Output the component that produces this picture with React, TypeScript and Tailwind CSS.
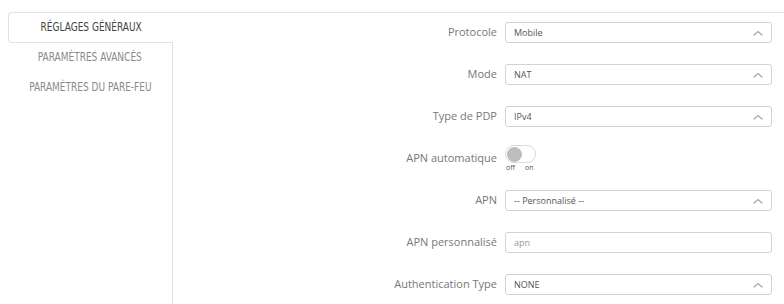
import React from 'react';

type Row =
  | { kind: 'select'; label: string; value: string }
  | { kind: 'input'; label: string; value: string }
  | { kind: 'switch'; label: string };

const rows: Row[] = [
  { kind: 'select', label: 'Protocole', value: 'Mobile' },
  { kind: 'select', label: 'Mode', value: 'NAT' },
  { kind: 'select', label: 'Type de PDP', value: 'IPv4' },
  { kind: 'switch', label: 'APN automatique' },
  { kind: 'select', label: 'APN', value: '-- Personnalisé --' },
  { kind: 'input', label: 'APN personnalisé', value: 'apn' },
  { kind: 'select', label: 'Authentication Type', value: 'NONE' },
];

const Chevron = () => (
  <svg width="10" height="6" viewBox="0 0 10 6" fill="none" className="shrink-0">
    <path d="M1 5 L5 1.5 L9 5" stroke="#a8a8a8" strokeWidth="1.3" strokeLinecap="round" />
  </svg>
);

function Field({ row }: { row: Row }) {
  if (row.kind === 'switch') {
    return (
      <div className="flex flex-col items-start">
        <div className="w-[31px] h-[18px] rounded-full border border-[#dadada] bg-white flex items-center pl-[1px]">
          <div className="w-[15px] h-[15px] rounded-full bg-[#bdbdbd]" />
        </div>
        <div className="flex gap-[10px] text-[7px] leading-[8px] text-[#555] mt-[1px] pl-[1px]">
          <span>off</span>
          <span>on</span>
        </div>
      </div>
    );
  }
  return (
    <div className="h-[21px] w-full border border-[#d2d2d2] rounded-[3px] flex items-center justify-between pl-[8px] pr-[8px] text-[9px] text-[#555] bg-white">
      <span className={row.kind === 'input' ? 'text-[#999]' : ''}>{row.value}</span>
      {row.kind === 'select' && <Chevron />}
    </div>
  );
}

function Tab({ label }: { label: string }) {
  return <span className="inline-block scale-x-[0.87] whitespace-nowrap">{label}</span>;
}

export default function App() {
  return (
    <div className="w-[784px] h-[304px] bg-white pt-[12px] flex font-['Open_Sans',sans-serif]">
      <div className="w-[173px] flex flex-col pl-[8px] font-['DejaVu_Sans_Condensed','DejaVu_Sans',sans-serif] text-[11.5px] uppercase">
        <div className="h-[31px] border-t border-l border-b border-[#e2e2e2] rounded-l-[4px] flex items-center justify-center text-[#444]">
          <Tab label="Réglages généraux" />
        </div>
        <div className="flex-1 border-r border-[#e2e2e2] flex flex-col text-[#8a8a8a]">
          <div className="h-[30px] flex items-center justify-center">
            <Tab label="Paramètres avancés" />
          </div>
          <div className="h-[30px] flex items-center justify-center">
            <Tab label="Paramètres du pare-feu" />
          </div>
        </div>
      </div>
      <div className="flex-1 border-t border-[#e2e2e2] pt-[9px] pr-[12px] flex flex-col gap-[21px]">
        {rows.map((row) => (
          <div key={row.label} className="flex items-center h-[21px]">
            <div className="w-[332px] shrink-0 text-right pr-[8px] text-[11px] text-[#777]">{row.label}</div>
            <div className="flex-1">
              <Field row={row} />
            </div>
          </div>
        ))}
      </div>
    </div>
  );
}
